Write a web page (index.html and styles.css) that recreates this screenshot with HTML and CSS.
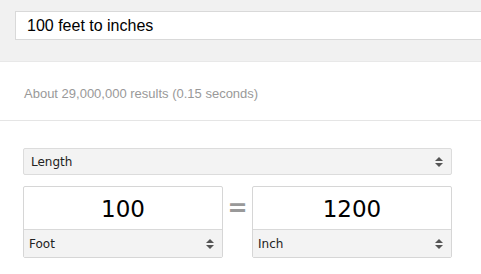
FILE: index.html
```html
<!DOCTYPE html>
<html>
<head>
	<meta charset="utf-8">
	<title>100 feet to inches</title>
	<link rel="stylesheet" href="styles.css">
</head>
<body>
<div class="topbar">
	<div class="searchbox">100 feet to inches</div>
</div>
<div class="stats">About 29,000,000 results (0.15 seconds)</div>
<div class="converter">
	<div class="select wide">
		<span>Length</span>
		<span class="arrows"><i class="up"></i><i class="down"></i></span>
	</div>
	<div class="row">
		<div class="unitbox">
			<div class="value">100</div>
			<div class="select">
				<span>Foot</span>
				<span class="arrows"><i class="up"></i><i class="down"></i></span>
			</div>
		</div>
		<div class="equals">=</div>
		<div class="unitbox">
			<div class="value">1200</div>
			<div class="select">
				<span>Inch</span>
				<span class="arrows"><i class="up"></i><i class="down"></i></span>
			</div>
		</div>
	</div>
</div>
</body>
</html>
```

FILE: styles.css
```css
body
{
	margin:0;
	background-color:#fff;
	font-family:"Liberation Sans", Arial, sans-serif;
}
.topbar
{
	background-color:#f1f1f1;
	height:62px;
	padding-top:11px;
	box-sizing:border-box;
	border-bottom:1px solid #e8e8e8;
}
.searchbox
{
	margin-left:15px;
	height:29px;
	box-sizing:border-box;
	background-color:#fff;
	border:1px solid #d9d9d9;
	border-right:none;
	padding-left:11px;
	font-size:16px;
	line-height:28px;
	color:#000;
}
.stats
{
	height:58px;
	padding-left:24px;
	font-size:13px;
	line-height:63px;
	color:#999;
	border-bottom:1px solid #e5e5e5;
}
.converter
{
	padding:27px 0 0 23px;
	width:429px;
	font-family:"DejaVu Sans", sans-serif;
}
.select
{
	display:flex;
	justify-content:space-between;
	align-items:center;
	background-color:#f3f3f3;
	font-size:12px;
	color:#222;
	padding:0 8px 0 7px;
}
.select.wide
{
	height:27px;
	box-sizing:border-box;
	border:1px solid #dcdcdc;
	border-radius:2px;
}
.arrows
{
	display:flex;
	flex-direction:column;
	gap:2px;
}
.arrows i
{
	width:0;
	height:0;
	border-left:4px solid transparent;
	border-right:4px solid transparent;
}
.arrows .up
{
	border-bottom:4px solid #555;
}
.arrows .down
{
	border-top:4px solid #555;
}
.row
{
	display:flex;
	align-items:flex-start;
	margin-top:11px;
}
.unitbox
{
	width:200px;
	height:72px;
	box-sizing:border-box;
	border:1px solid #d6d6d6;
	border-radius:2px;
	display:flex;
	flex-direction:column;
}
.value
{
	height:42px;
	border-bottom:1px solid #d9d9d9;
	text-align:center;
	font-size:23px;
	line-height:44px;
	color:#000;
}
.unitbox .select
{
	flex:1;
	padding-left:5px;
	padding-top:1px;
}
.equals
{
	width:29px;
	text-align:center;
	font-size:24px;
	line-height:44px;
	color:#999;
	font-weight:bold;
}
```
